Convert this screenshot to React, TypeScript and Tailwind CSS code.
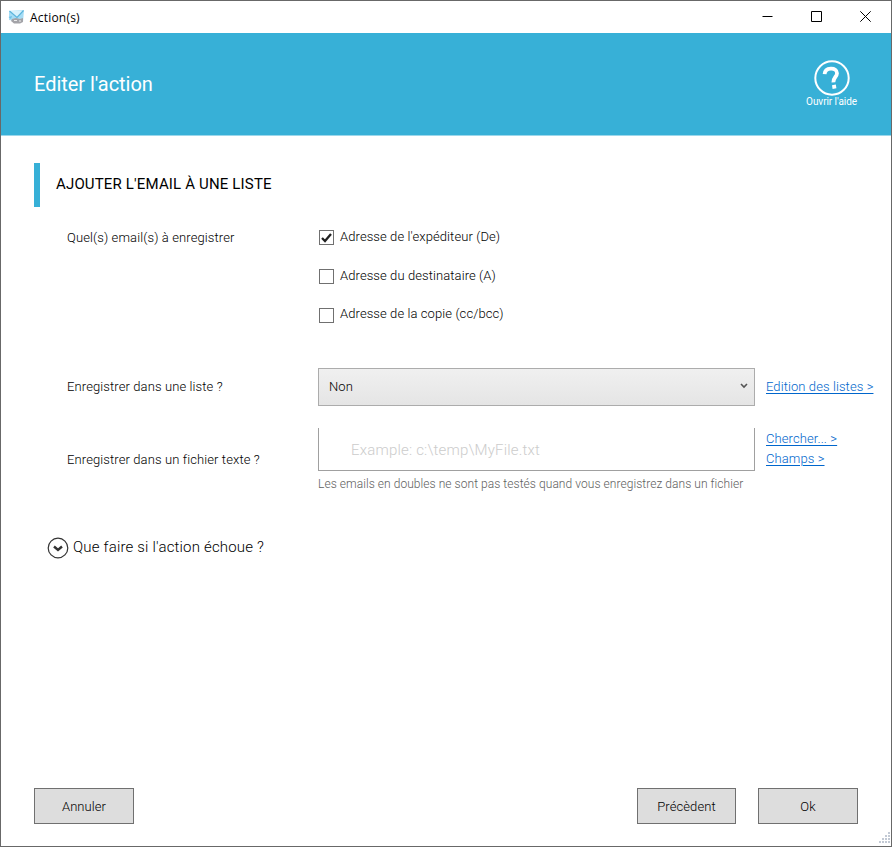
const links = 'text-[#0066cc] underline underline-offset-2 decoration-1 whitespace-nowrap self-start tracking-[0.09px]';

function AppIcon() {
  return (
    <svg width="17" height="15" viewBox="0 0 17 15">
      <path d="M1 1L16 0L15 12L1 10Z" fill="#a5dcf5" />
      <path d="M1.5 1L9 7.5L15.5 0.5" fill="#d8f1fc" stroke="#5bb4dc" strokeWidth="1.2" />
      <path d="M0.5 7L4 6L3 9Z" fill="#6cc0e6" />
      <path d="M4 9L8 8L12 9L15 8V12L12 13.5H6L3 11Z" fill="#a3a3a8" />
      <path d="M6 10.5H9M11 11H13" stroke="#ececec" />
    </svg>
  );
}

function HelpIcon() {
  return (
    <svg width="36" height="36" viewBox="0 0 36 36" fill="none" stroke="#fff">
      <circle cx="18" cy="18" r="16.7" strokeWidth="2" />
      <path d="M10.6 14.2C10.8 10.6 13.4 8.9 16.8 8.7C20.4 8.5 23 10.2 23 13.2C23 16.8 19 17.6 19.4 22.4" strokeWidth="3.8" />
      <path d="M18 25.2L21.8 24.6L22.4 28.2L18.6 28.9Z" fill="#fff" stroke="none" />
    </svg>
  );
}

function WindowControls() {
  return (
    <div className="ml-auto flex items-center pr-5 gap-[38px] -mt-px">
      <svg width="11" height="11" viewBox="0 0 11 11" stroke="#000">
        <path d="M0.5 5.5H10.5" />
      </svg>
      <svg width="11" height="11" viewBox="0 0 11 11" stroke="#000" fill="none">
        <path d="M0.5 0.5H10.5V10.5H0.5Z" />
      </svg>
      <svg width="11" height="11" viewBox="0 0 11 11" stroke="#000">
        <path d="M0.3 0.3L10.7 10.7M10.7 0.3L0.3 10.7" />
      </svg>
    </div>
  );
}

function Checkbox({ label, checked, offset = '-mt-[2px]' }: { label: string; checked?: boolean; offset?: string }) {
  return (
    <label className="flex items-center h-[15px]">
      <span className="w-[15px] h-[15px] border border-[#707070] bg-white flex items-center justify-center">
        {checked && (
          <svg width="13" height="13" viewBox="0 0 13 13" fill="none" stroke="#212121" strokeWidth="2.3">
            <path d="M2 7L5 10L11 3" />
          </svg>
        )}
      </span>
      <span className={`ml-[6px] ${offset} tracking-[0.09px] leading-[15px]`}>{label}</span>
    </label>
  );
}

function Button({ label, width = 'w-[100px]' }: { label: string; width?: string }) {
  return (
    <button className={`${width} h-9 pt-px border border-[#707070] bg-[#dddddd] text-[13px] font-light tracking-[0.08px]`}>
      {label}
    </button>
  );
}

function ResizeGrip() {
  return (
    <svg className="absolute right-px bottom-0.5" width="12" height="12" viewBox="0 0 12 12" fill="#c3cad5">
      <path d="M10 0h2v2h-2zM7 3h2v2h-2zM10 3h2v2h-2zM4 6h2v2h-2zM7 6h2v2h-2zM10 6h2v2h-2zM1 9h2v2h-2zM4 9h2v2h-2zM7 9h2v2h-2zM10 9h2v2h-2z" />
    </svg>
  );
}

export default function App() {
  return (
    <div className="relative w-[892px] h-[847px] flex flex-col bg-white border border-[#686868] font-['Roboto',sans-serif] font-light text-[13px] leading-4 text-black">
      <div className="h-8 flex items-center shrink-0 pl-[7px]">
        <AppIcon />
        <span className="ml-[5px] mt-[2px] font-['Open_Sans',sans-serif] font-normal text-[12px] tracking-[0.2px]">Action(s)</span>
        <WindowControls />
      </div>

      <header className="h-[103px] shrink-0 bg-[#37b0d7] border-b border-[#9bd7eb] text-white flex items-center justify-between pl-[33px] pr-[34px]">
        <h1 className="text-[20px] leading-6 font-normal tracking-[-0.03px]">Editer l'action</h1>
        <div className="flex flex-col items-center">
          <HelpIcon />
          <span className="text-[10px] leading-3 font-normal tracking-[-0.06px]">Ouvrir l'aide</span>
        </div>
      </header>

      <main className="flex flex-col pl-[33px] pt-[27px]">
        <h2 className="h-11 flex items-center border-l-6 border-[#37b0d7] pl-4 pb-[2px] text-[15px] font-normal tracking-[0.16px]">
          AJOUTER L'EMAIL À UNE LISTE
        </h2>

        <div className="flex mt-[23px] pl-[33px]">
          <div className="w-[252px] tracking-[0.11px]">Quel(s) email(s) à enregistrer</div>
          <div className="flex flex-col gap-6">
            <Checkbox label="Adresse de l'expéditeur (De)" checked />
            <Checkbox label="Adresse du destinataire (A)" />
            <Checkbox label="Adresse de la copie (cc/bcc)" offset="-mt-1" />
          </div>
        </div>

        <div className="flex items-center mt-[45px] pl-[33px] h-[38px]">
          <div className="w-[251px] tracking-[0.11px]">Enregistrer dans une liste ?</div>
          <div className="w-[437px] h-[38px] flex items-center justify-between border border-[#acacac] bg-linear-to-b from-[#f0f0f0] to-[#e5e5e5] pl-[10px] pr-[6px]">
            <span className="tracking-[0.1px]">Non</span>
            <svg width="8" height="6" viewBox="0 0 8 6" fill="none" stroke="#555" strokeWidth="1.6" className="-mt-[2px]">
              <path d="M1 1L4 4L7 1" />
            </svg>
          </div>
          <a className={`${links} ml-[11px] mt-[11px]`}>Edition des listes &gt;</a>
        </div>

        <div className="flex mt-[22px] pl-[33px]">
          <div className="w-[251px] pt-6 tracking-[0.11px]">Enregistrer dans un fichier texte ?</div>
          <div className="w-[437px]">
            <div className="h-[43px] flex items-center border border-t-0 border-[#a0a0a0] pl-8 pt-px text-[15px] tracking-[0.19px] text-[#cccccc]">
              Example: c:\temp\MyFile.txt
            </div>
            <div className="mt-[5px] text-[12px] tracking-[0.055px] text-[#606060] whitespace-nowrap">
              Les emails en doubles ne sont pas testés quand vous enregistrez dans un fichier
            </div>
          </div>
          <div className="ml-[11px] mt-[3px] flex flex-col gap-1">
            <a className={links}>Chercher... &gt;</a>
            <a className={links}>Champs &gt;</a>
          </div>
        </div>

        <div className="flex items-center mt-[45px] pl-[13px]">
          <svg width="22" height="22" viewBox="0 0 22 22" fill="none" stroke="#333">
            <circle cx="11" cy="11" r="9.8" strokeWidth="1.2" />
            <path d="M7 9.5L11 13L15 9.5" strokeWidth="2.4" />
          </svg>
          <span className="ml-1 -mt-[2px] text-[15px] tracking-[0.18px]">Que faire si l'action échoue ?</span>
        </div>
      </main>

      <footer className="mt-auto mb-[22px] flex pl-[33px] pr-[33px]">
        <Button label="Annuler" />
        <div className="ml-auto flex gap-[22px]">
          <Button label="Précèdent" width="w-[99px]" />
          <Button label="Ok" />
        </div>
      </footer>
      <ResizeGrip />
    </div>
  );
}
